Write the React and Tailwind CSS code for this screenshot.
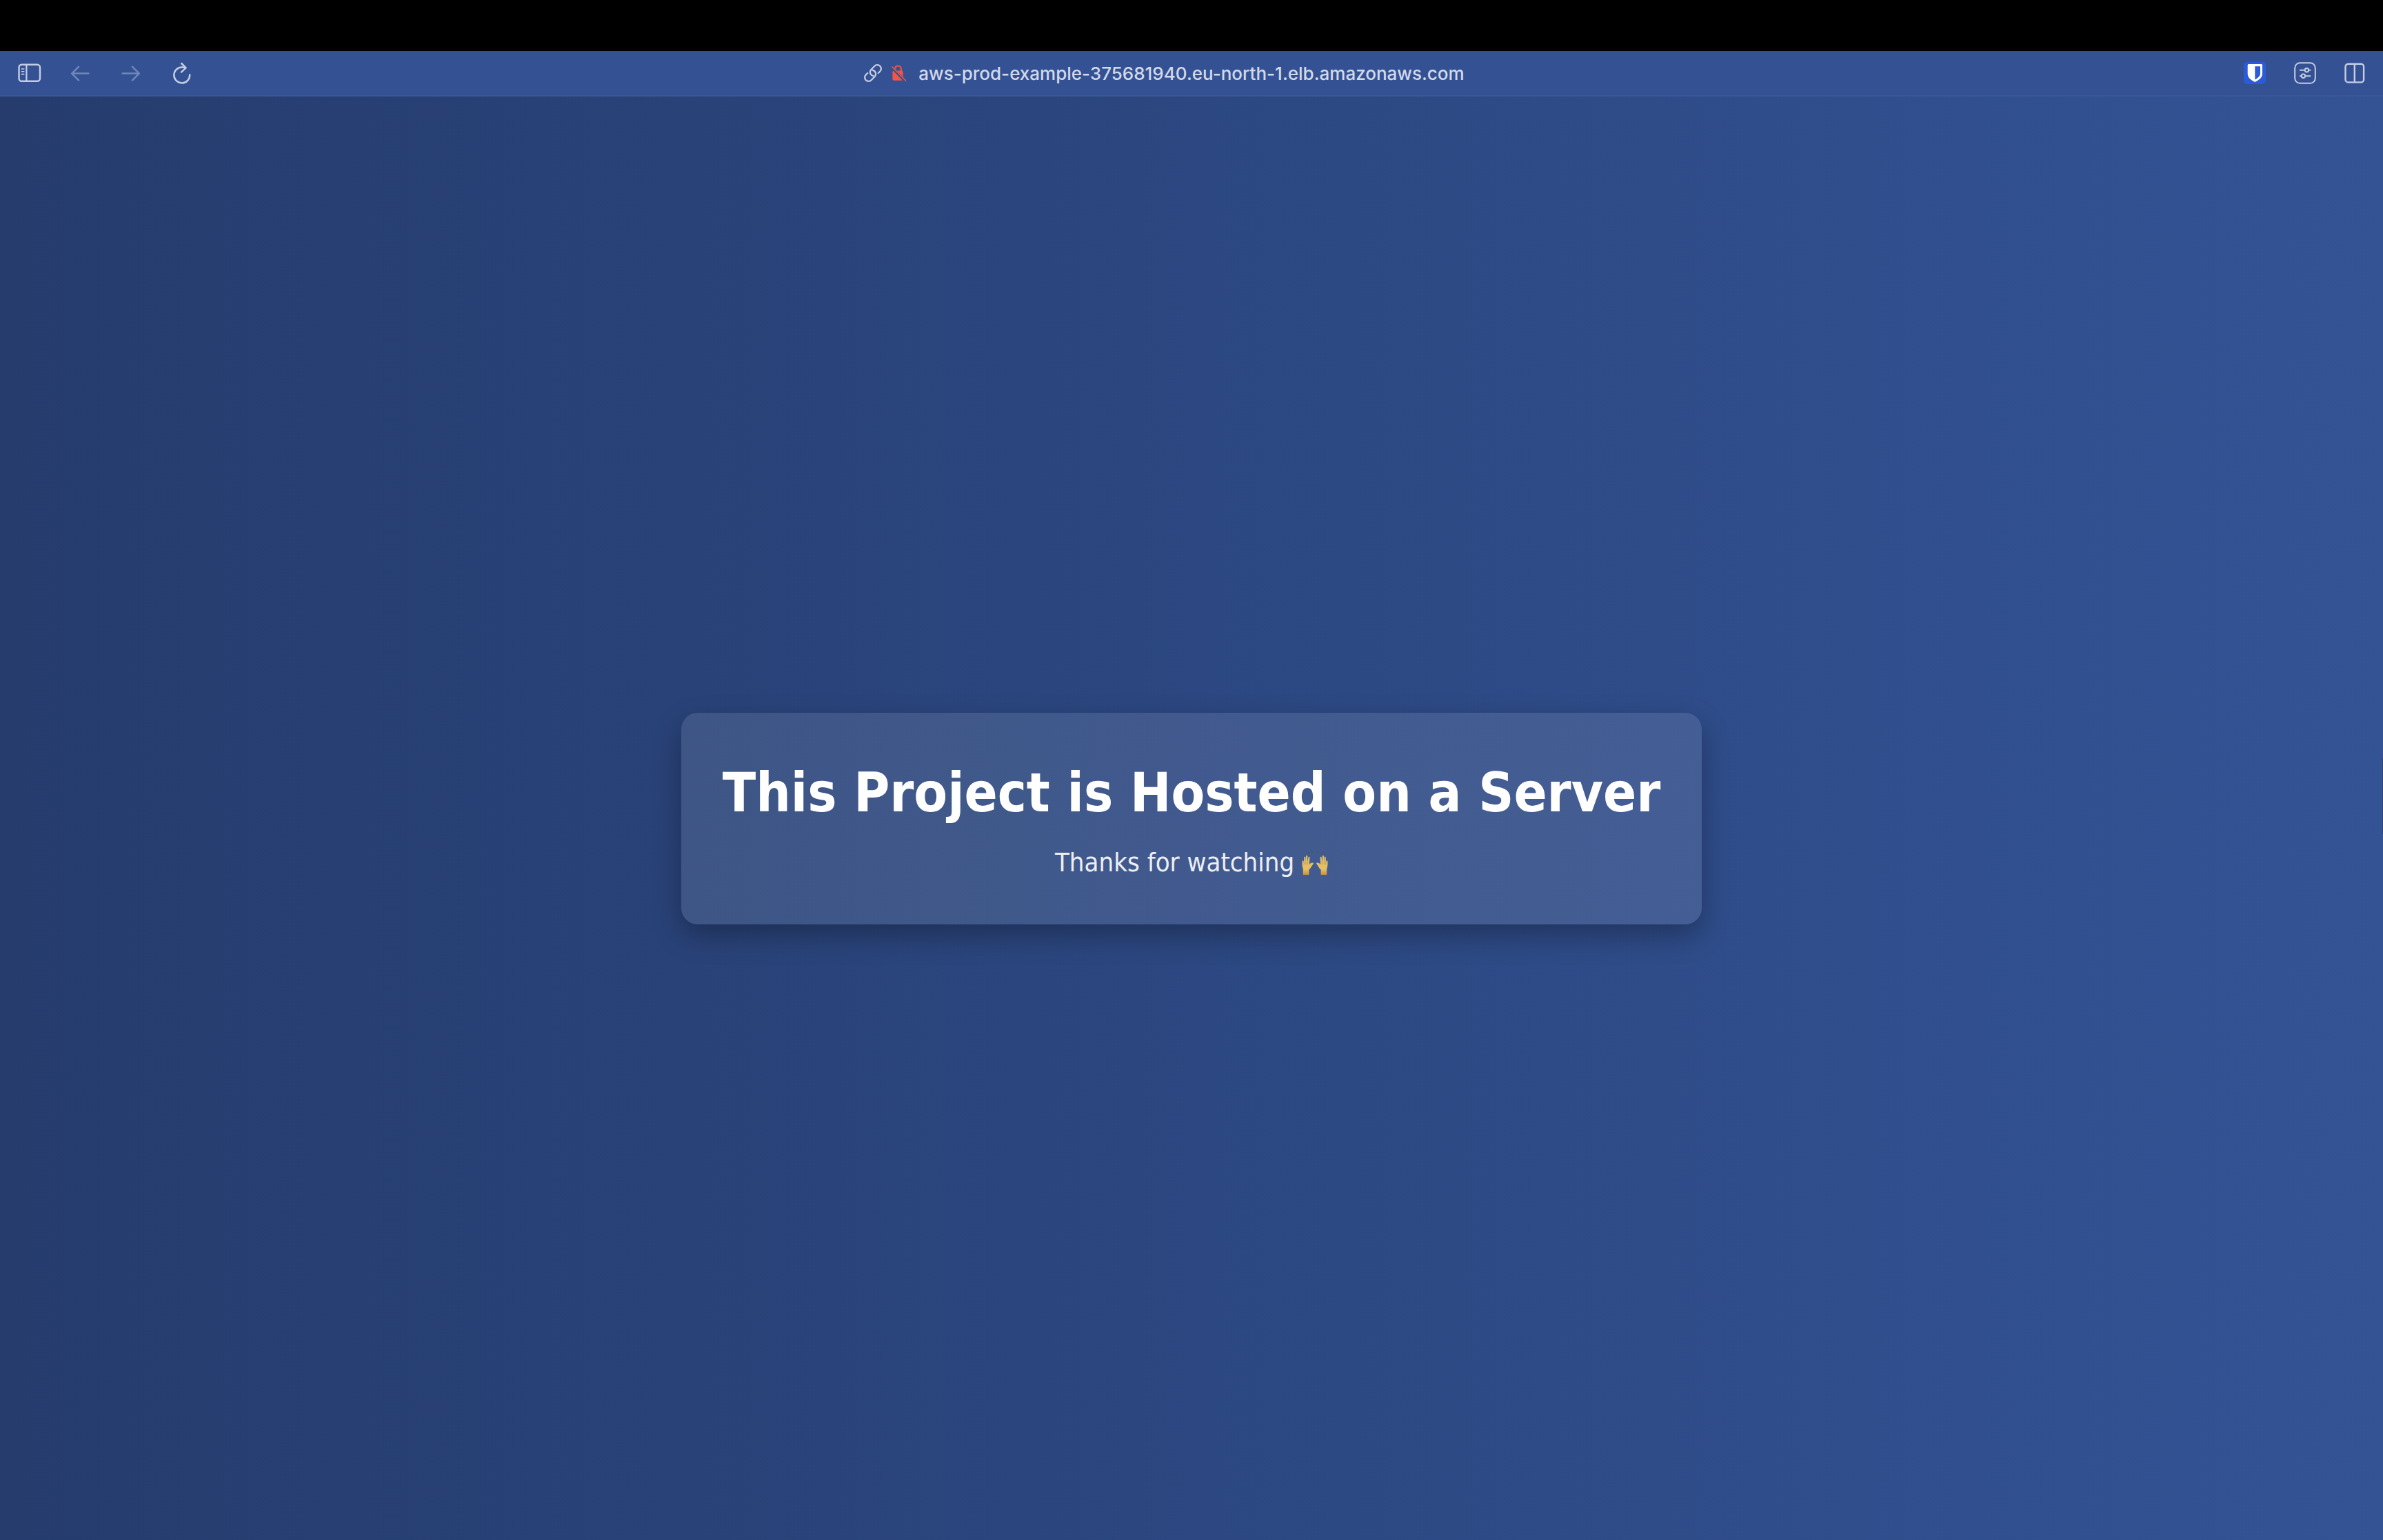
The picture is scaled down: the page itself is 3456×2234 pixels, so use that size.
function SidebarIcon() {
  return (
    <svg viewBox="0 0 34 28" className="h-7 w-[34px]" fill="none" stroke="currentColor" strokeLinecap="round">
      <rect x="1.5" y="1.8" width="30.5" height="24" rx="4" strokeWidth="2.4" />
      <path d="M12.4 2v24" strokeWidth="2.2" />
      <path d="M5.4 8h3.4M5.4 11.8h3.4M5.4 15.6h3.4" strokeWidth="1.6" />
    </svg>
  );
}

function BackIcon() {
  return (
    <svg viewBox="0 0 28 24" className="h-6 w-7" fill="none" stroke="currentColor" strokeWidth="2.5" strokeLinecap="round" strokeLinejoin="round">
      <path d="M12 2.8 2.2 12.6 12 22.300M2.400 12.600h24" />
    </svg>
  );
}

function ForwardIcon() {
  return (
    <svg viewBox="0 0 28 24" className="h-6 w-7" fill="none" stroke="currentColor" strokeWidth="2.5" strokeLinecap="round" strokeLinejoin="round">
      <path d="M16 2.8 25.8 12.6 16 22.300M25.600 12.600h-24" />
    </svg>
  );
}

function ReloadIcon() {
  return (
    <svg viewBox="0 0 28 32" className="h-8 w-7" fill="none" stroke="currentColor" strokeWidth="2.5" strokeLinecap="round" strokeLinejoin="round">
      <path d="M25.2 18.6A11.4 11.4 0 1 1 13.8 7.6c2 0 3.6.2 5 .6" />
      <path d="M13.2 2 19.6 8.4 13 14.6" />
    </svg>
  );
}

function LinkIcon() {
  return (
    <svg viewBox="0 0 28 28" className="h-7 w-7" fill="none" stroke="currentColor" strokeWidth="2.3" strokeLinecap="round">
      <g transform="rotate(-45 14 14)">
        <path d="M19.5 19.5H23a5.5 5.5 0 0 0 0-11h-7a5.5 5.5 0 0 0-4.500 8.700" />
        <path d="M8.500 8.500H5a5.500 5.500 0 0 0 0 11h7a5.500 5.500 0 0 0 4.500-8.700" />
      </g>
    </svg>
  );
}

function InsecureIcon() {
  return (
    <svg viewBox="0 0 24 26" className="h-[26px] w-6 text-[#f05545]" fill="none" stroke="currentColor" strokeLinecap="round">
      <path d="M2.400 11.800c0-1.400.8-2.200 2.200-2.200h10.800c1.400 0 2.200.8 2.200 2.200v9.800c0 1.400-.8 2.200-2.200 2.200H4.600c-1.400 0-2.200-.8-2.200-2.200z" fill="currentColor" stroke="none" />
      <path d="M6 10.500V7.200a4.400 4.700 0 0 1 8.800 0v3.300" strokeWidth="2.200" />
      <path d="M1.400 4.600 21 25" stroke="#345293" strokeWidth="4" />
      <path d="M2 4 21.600 24" strokeWidth="1.700" />
    </svg>
  );
}

function ShieldIcon() {
  return (
    <svg viewBox="0 0 32 32" className="size-8">
      <rect width="32" height="32" rx="5" fill="#2b5bd9" />
      <path d="M7 3h18.600a1.400 1.400 0 0 1 1.400 1.400V17c0 5-4 8.800-10.700 12C9.600 25.800 5.700 22 5.700 17V4.400A1.400 1.400 0 0 1 7 3z" fill="#fff" />
      <path d="M16.300 6.200H24V17c0 3-2.600 5.700-7.700 8.600z" fill="#2b5bd9" />
    </svg>
  );
}

function SlidersIcon() {
  return (
    <svg viewBox="0 0 32 32" className="size-8" fill="none" stroke="currentColor" strokeWidth="2" strokeLinecap="round">
      <rect x="1.200" y="1.200" width="29.600" height="29.600" rx="7.500" />
      <path d="M8.800 11.800h6.600M21.400 11.800h2M8.800 20.300h1.600M16.400 20.300h7" />
      <circle cx="18.400" cy="11.800" r="2.700" />
      <circle cx="13.400" cy="20.300" r="2.700" />
    </svg>
  );
}

function SplitIcon() {
  return (
    <svg viewBox="0 0 30 30" className="size-[30px]" fill="none" stroke="currentColor" strokeWidth="2.4">
      <rect x="1.500" y="1.800" width="26.600" height="26.600" rx="4" />
      <path d="M14.800 2v26" />
    </svg>
  );
}

function Hand() {
  return (
    <g>
      <path
        d="M1.800 38V29.600C.6 26.800.2 23 .5 18.600c.1-1.500 2-1.500 2.200 0l.4 3.400.1-9c0-1.600 2.100-1.600 2.200 0l.3 7.600.3-9.400c.1-1.600 2.200-1.600 2.300 0l.1 9.400 1-7.800c.2-1.600 2.200-1.300 2.100.2l-.6 10.200c1-1.600 2.600-2.600 4.600-2.600 1.500 0 1.800 1 1 1.900-2.200 2.300-3.100 6-6.100 7.900V38z"
        fill="url(#skin)"
      />
      <path d="M3.200 20.500v3M5.700 20v3M8.300 20v3" stroke="#c98d2b" strokeWidth=".6" />
    </g>
  );
}

function RaisedHands() {
  return (
    <svg viewBox="0 0 38 40" className="inline-block h-10 w-[38px] align-[-7px] opacity-90" role="img" aria-label="Raised hands">
      <defs>
        <linearGradient id="skin" x1="0" y1="0" x2="0" y2="1">
          <stop offset="0" stopColor="#edc462" />
          <stop offset=".7" stopColor="#f7cc62" />
          <stop offset="1" stopColor="#d89a35" />
        </linearGradient>
      </defs>
      <Hand />
      <g transform="matrix(-1 0 0 1 38 0)">
        <Hand />
      </g>
      <path d="m6 4.800 4 2.500-2.600 1.500zM13.800 2.200l2.600 3.400-2.600.6zM24.200 2.200l-2.600 3.400 2.600.6zM32 4.800l-4 2.500 2.600 1.500z" fill="#50545f" />
    </svg>
  );
}

export default function App() {
  return (
    <div className="flex min-h-screen flex-col overflow-hidden bg-black pt-[74px]">
      <header className="grid h-[66px] grid-cols-[1fr_auto_1fr] items-center border-b-2 border-[#3a5896] bg-[#345293] px-[26px] text-[#c5cde2]">
        <nav aria-label="Navigation" className="flex items-center gap-[46px]">
          <button type="button" aria-label="Show sidebar" className="mr-[-4px]"><SidebarIcon /></button>
          <button type="button" aria-label="Back" disabled className="text-[#6f87b8]"><BackIcon /></button>
          <button type="button" aria-label="Forward" disabled className="text-[#6f87b8]"><ForwardIcon /></button>
          <button type="button" aria-label="Reload"><ReloadIcon /></button>
        </nav>
        <div className="flex items-center pr-20">
          <LinkIcon />
          <span className="ml-3"><InsecureIcon /></span>
          <a href="#top" className="ml-4 pt-px font-['Inter',sans-serif] text-[26px] leading-8 font-medium text-[#d2d9ea]">
            aws-prod-example-375681940.eu-north-1.elb.amazonaws.com
          </a>
        </div>
        <div className="flex items-center justify-end gap-[41px]">
          <button type="button" aria-label="Password manager"><ShieldIcon /></button>
          <button type="button" aria-label="Page settings"><SlidersIcon /></button>
          <button type="button" aria-label="Split view"><SplitIcon /></button>
        </div>
      </header>

      <main
        id="top"
        className="relative flex flex-1 items-center justify-center bg-linear-to-r/srgb from-[#253c6d] to-[#335395] font-['DejaVu_Sans_Condensed','DejaVu_Sans',sans-serif]"
      >
        <section className="rounded-3xl bg-white/10 px-15 py-16 text-center shadow-[0_16px_40px_rgba(0,0,0,0.3)]">
          <h1 className="text-[79px] leading-[104px] font-bold text-white">This Project is Hosted on a Server</h1>
          <p className="mt-6 text-[38px] leading-[51px] text-white/90">
            Thanks for watching <RaisedHands />
          </p>
        </section>
        <div className="absolute top-[960px] right-0 h-[110px] w-px bg-[#2c4272]" />
      </main>
    </div>
  );
}
